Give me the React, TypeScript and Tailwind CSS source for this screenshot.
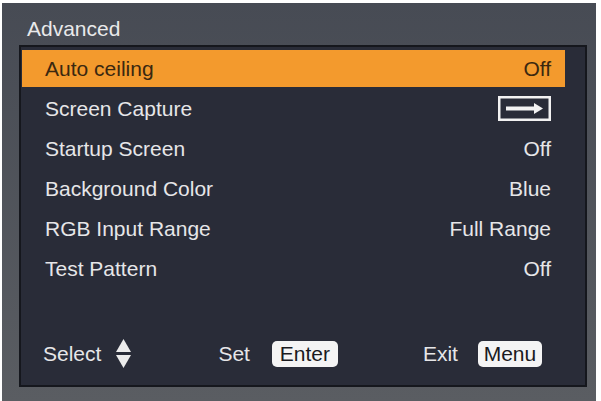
const rows = [
  { label: "Auto ceiling", value: "Off", active: true },
  { label: "Screen Capture", value: "capture" },
  { label: "Startup Screen", value: "Off" },
  { label: "Background Color", value: "Blue" },
  { label: "RGB Input Range", value: "Full Range" },
  { label: "Test Pattern", value: "Off" },
];

const CaptureIcon = () => (
  <svg width="53" height="25" viewBox="0 0 53 25" className="block">
    <rect x="1.25" y="1.25" width="50.5" height="22.5" fill="none" stroke="#f2f2f2" strokeWidth="2.5" />
    <path d="M8 12.5 H38" stroke="#f2f2f2" strokeWidth="4" />
    <path d="M36 7 L45 12.5 L36 18 Z" fill="#f2f2f2" />
  </svg>
);

const UpDown = () => (
  <svg width="17" height="31" viewBox="0 0 17 31" className="block">
    <path d="M8.5 1 L16 14 H1 Z" fill="#ececec" />
    <path d="M1 17 H16 L8.5 30 Z" fill="#ececec" />
  </svg>
);

const Badge = ({ children, w }: { children: string; w: string }) => (
  <div
    className={`${w} h-[26px] rounded-[5px] bg-[#f4f4f4] text-[#1a1a1e] flex items-center justify-center leading-none`}
  >
    {children}
  </div>
);

export default function App() {
  return (
    <div
      className="w-[601px] h-[401px] bg-white overflow-hidden text-[21px] leading-none"
      style={{ fontFamily: '"Liberation Sans", Arial, sans-serif' }}
    >
      <div className="ml-[2px] mt-[3px] w-[594px] h-[398px] bg-gradient-to-b from-[#474b54] to-[#5a5d62] flex flex-col">
        {/* title bar */}
        <div className="h-[42px] pl-[25px] pt-[15px] text-[#e9e9ea]">Advanced</div>

        {/* menu body */}
        <div className="ml-[17px] w-[568px] h-[342px] border-2 border-[#15171d] bg-[#292c38] flex flex-col">
          <div className="mt-[3px] ml-[1px] w-[543px] flex flex-col gap-[3px]">
            {rows.map((r) => (
              <div
                key={r.label}
                className={`h-[37px] pl-[23px] pr-[14px] flex items-center justify-between ${
                  r.active ? "bg-[#f39a2d] text-[#3a2810]" : "text-[#e6e6e8]"
                }`}
              >
                <span>{r.label}</span>
                {r.value === "capture" ? <CaptureIcon /> : <span>{r.value}</span>}
              </div>
            ))}
          </div>

          {/* key hints */}
          <div className="mt-auto mb-[16px] pl-[22px] flex items-center text-[#e6e6e8]">
            <span>Select</span>
            <span className="ml-[14px]">
              <UpDown />
            </span>
            <span className="ml-[86px]">Set</span>
            <span className="ml-[22px]">
              <Badge w="w-[66px]">Enter</Badge>
            </span>
            <span className="ml-[85px]">Exit</span>
            <span className="ml-[20px]">
              <Badge w="w-[64px]">Menu</Badge>
            </span>
          </div>
        </div>
      </div>
    </div>
  );
}
